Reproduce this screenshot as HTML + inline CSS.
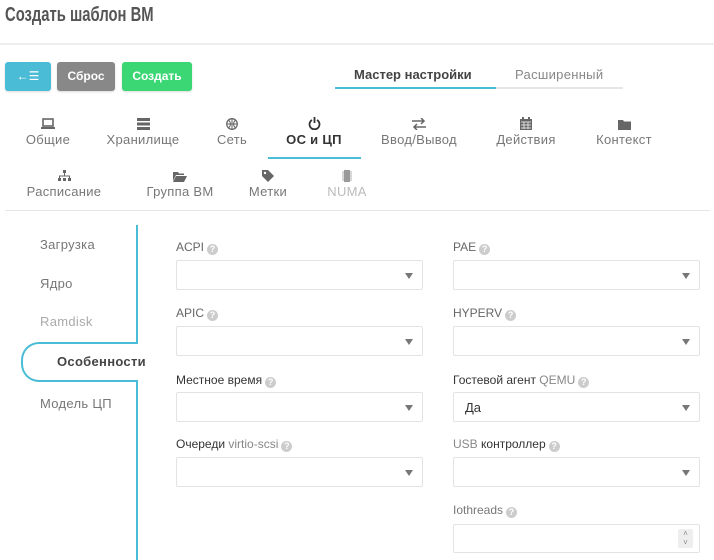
<!DOCTYPE html>
<html><head><meta charset="utf-8"><style>
*{margin:0;padding:0;box-sizing:border-box}
body{width:714px;height:560px;overflow:hidden;background:#fff;font-family:"Liberation Sans","DejaVu Sans",sans-serif;color:#555;position:relative}
.a{position:absolute;white-space:nowrap}
.btn{position:absolute;top:62px;height:29px;border-radius:3px;color:#fff;font-weight:bold;font-size:12px;line-height:29px;text-align:center;box-shadow:0 1px 2px rgba(0,0,0,.15)}
.tab{position:absolute;text-align:center;font-size:13px;color:#777;width:110px;letter-spacing:.3px}
.tab .ic{height:14px;margin-bottom:2px;display:flex;align-items:flex-end;justify-content:center}
.tab svg{display:block;fill:#666}
.lbl{position:absolute;font-size:12px;color:#333;white-space:nowrap}
.lbl .g{color:#888}
.q{display:inline-block;width:11px;height:11px;border-radius:50%;background:#ccc;color:#fff;font-size:9px;line-height:11px;text-align:center;font-weight:bold;vertical-align:-1px;margin-left:3px}
.sel{position:absolute;width:247px;height:30px;border:1px solid #e3e3e3;border-radius:2px;background:#fff}
.sel:after{content:"";position:absolute;right:9px;top:12px;border-left:4px solid transparent;border-right:4px solid transparent;border-top:6px solid #777}
.vt{position:absolute;left:40px;font-size:13px;color:#777;letter-spacing:.3px}
</style></head><body>
<div class="a" style="left:5px;top:4px;font-size:20px;font-weight:bold;color:#555;transform:scaleX(0.74);transform-origin:0 0">Создать шаблон ВМ</div>
<div class="a" style="left:0;top:43px;width:714px;height:2px;background:#eee"></div>

<div class="btn" style="left:5px;width:46px;background:#4bbcd6">←☰</div>
<div class="btn" style="left:57px;width:58px;background:#888">Сброс</div>
<div class="btn" style="left:122px;width:70px;background:#3ad774">Создать</div>

<div class="a" style="left:354px;top:67px;font-size:13px;font-weight:bold;color:#444">Мастер настройки</div>
<div class="a" style="left:515px;top:67px;font-size:13px;color:#888;letter-spacing:.3px">Расширенный</div>
<div class="a" style="left:335px;top:87px;width:288px;height:2px;background:#e6e6e6"></div>
<div class="a" style="left:335px;top:87px;width:161px;height:2px;background:#4bbcd6"></div>

<div class="tab" style="left:-7px;top:116px"><div class="ic"><svg width="14" height="12" viewBox="0 0 14 12"><rect x="2" y="1" width="10" height="7" fill="none" stroke="#666" stroke-width="1.6"/><rect x="0" y="9" width="14" height="2"/></svg></div>Общие</div>
<div class="tab" style="left:88px;top:116px"><div class="ic"><svg width="13" height="12" viewBox="0 0 13 12"><rect y="0" width="13" height="3"/><rect y="4.5" width="13" height="3"/><rect y="9" width="13" height="3"/></svg></div>Хранилище</div>
<div class="tab" style="left:177px;top:116px"><div class="ic"><svg width="12" height="12" viewBox="0 0 12 12"><circle cx="6" cy="6" r="5.3" fill="none" stroke="#666" stroke-width="1.3"/><path d="M1 6h10M6 1v10M3 2.5q3 3.5 0 7M9 2.5q-3 3.5 0 7" stroke="#666" fill="none"/></svg></div>Сеть</div>
<div class="tab" style="left:259px;top:116px;color:#333;font-weight:bold"><div class="ic"><svg width="13" height="13" viewBox="0 0 13 13"><path d="M4 3a5 5 0 1 0 5 0" fill="none" stroke="#333" stroke-width="1.8"/><path d="M6.5 0v6" stroke="#333" stroke-width="1.8"/></svg></div>ОС и ЦП</div>
<div class="a" style="left:268px;top:157px;width:93px;height:2px;background:#4bbcd6"></div>
<div class="tab" style="left:364px;top:116px"><div class="ic"><svg width="14" height="12" viewBox="0 0 14 12"><path d="M0 3h11M9 0l3 3-3 3M14 9H3M5 6l-3 3 3 3" fill="none" stroke="#666" stroke-width="1.5"/></svg></div>Ввод/Вывод</div>
<div class="tab" style="left:471px;top:116px"><div class="ic"><svg width="12" height="13" viewBox="0 0 12 13"><rect x="0" y="2" width="12" height="11"/><rect x="2" y="0" width="2" height="3"/><rect x="8" y="0" width="2" height="3"/><path d="M1 5h10M1 8h10M1 11h10M4 5v7M8 5v7" stroke="#fff" stroke-width=".7"/></svg></div>Действия</div>
<div class="tab" style="left:569px;top:116px"><div class="ic"><svg width="13" height="11" viewBox="0 0 13 11"><path d="M0 1h5l1 1.5h7V11H0z"/></svg></div>Контекст</div>

<div class="tab" style="left:9px;top:168px"><div class="ic"><svg width="13" height="12" viewBox="0 0 13 12"><rect x="5" y="0" width="3" height="3"/><path d="M6.5 3v3M1.5 9V6h10v3" fill="none" stroke="#666"/><rect x="0" y="8" width="3" height="3"/><rect x="5" y="8" width="3" height="3"/><rect x="10" y="8" width="3" height="3"/></svg></div>Расписание</div>
<div class="tab" style="left:125px;top:168px"><div class="ic"><svg width="14" height="11" viewBox="0 0 14 11"><path d="M0 1h5l1 1.5h5V4H3L0 10z M3 5h11l-3 6H0z"/></svg></div>Группа ВМ</div>
<div class="tab" style="left:213px;top:168px"><div class="ic"><svg width="12" height="12" viewBox="0 0 12 12"><path d="M0 0h6l6 6-6 6-6-6z"/><circle cx="3" cy="3" r="1.2" fill="#fff"/></svg></div>Метки</div>
<div class="tab" style="left:292px;top:168px;color:#bbb"><div class="ic"><svg width="10" height="12" viewBox="0 0 10 12" style="fill:#999"><rect x="2" y="0" width="6" height="12"/><path d="M0 2h2M0 4h2M0 6h2M0 8h2M0 10h2M8 2h2M8 4h2M8 6h2M8 8h2M8 10h2" stroke="#999" stroke-width=".8"/></svg></div>NUMA</div>

<div class="a" style="left:5px;top:210px;width:705px;height:1px;background:#e6e6e6"></div>

<div class="a" style="left:136px;top:225px;width:2px;height:118px;background:#4bbcd6"></div>
<div class="a" style="left:136px;top:380px;width:2px;height:180px;background:#4bbcd6"></div>
<div class="a" style="left:21px;top:342px;width:117px;height:40px;border:2px solid #4bbcd6;border-right:none;border-radius:18px 0 0 18px;background:#fff"></div>
<div class="vt" style="top:237px">Загрузка</div>
<div class="vt" style="top:276px">Ядро</div>
<div class="vt" style="top:314px;color:#aaa">Ramdisk</div>
<div class="vt" style="left:57px;top:354px;font-weight:bold;color:#444">Особенности</div>
<div class="vt" style="top:396px">Модель ЦП</div>

<div class="lbl" style="left:176px;top:240px;color:#666">ACPI<span class="q">?</span></div>
<div class="sel" style="left:176px;top:260px"></div>
<div class="lbl" style="left:176px;top:306px;color:#666">APIC<span class="q">?</span></div>
<div class="sel" style="left:176px;top:326px"></div>
<div class="lbl" style="left:176px;top:373px">Местное время<span class="q">?</span></div>
<div class="sel" style="left:176px;top:392px"></div>
<div class="lbl" style="left:176px;top:437px">Очереди <span class="g">virtio-scsi</span><span class="q">?</span></div>
<div class="sel" style="left:176px;top:457px"></div>

<div class="lbl" style="left:453px;top:240px;color:#666">PAE<span class="q">?</span></div>
<div class="sel" style="left:453px;top:260px"></div>
<div class="lbl" style="left:453px;top:306px;color:#666">HYPERV<span class="q">?</span></div>
<div class="sel" style="left:453px;top:326px"></div>
<div class="lbl" style="left:453px;top:373px">Гостевой агент <span class="g">QEMU</span><span class="q">?</span></div>
<div class="sel" style="left:453px;top:392px"><span class="a" style="left:11px;top:7px;font-size:13px;color:#333">Да</span></div>
<div class="lbl" style="left:453px;top:437px"><span class="g">USB</span> контроллер<span class="q">?</span></div>
<div class="sel" style="left:453px;top:457px"></div>
<div class="lbl" style="left:453px;top:503px;color:#777">Iothreads<span class="q">?</span></div>
<div class="a" style="left:453px;top:524px;width:247px;height:29px;border:1px solid #e3e3e3;border-radius:2px"><span class="a" style="right:6px;top:4px;width:15px;height:19px;background:#eee;border-radius:2px;font-size:8px;line-height:9px;text-align:center;color:#888">˄<br>˅</span></div>
</body></html>
